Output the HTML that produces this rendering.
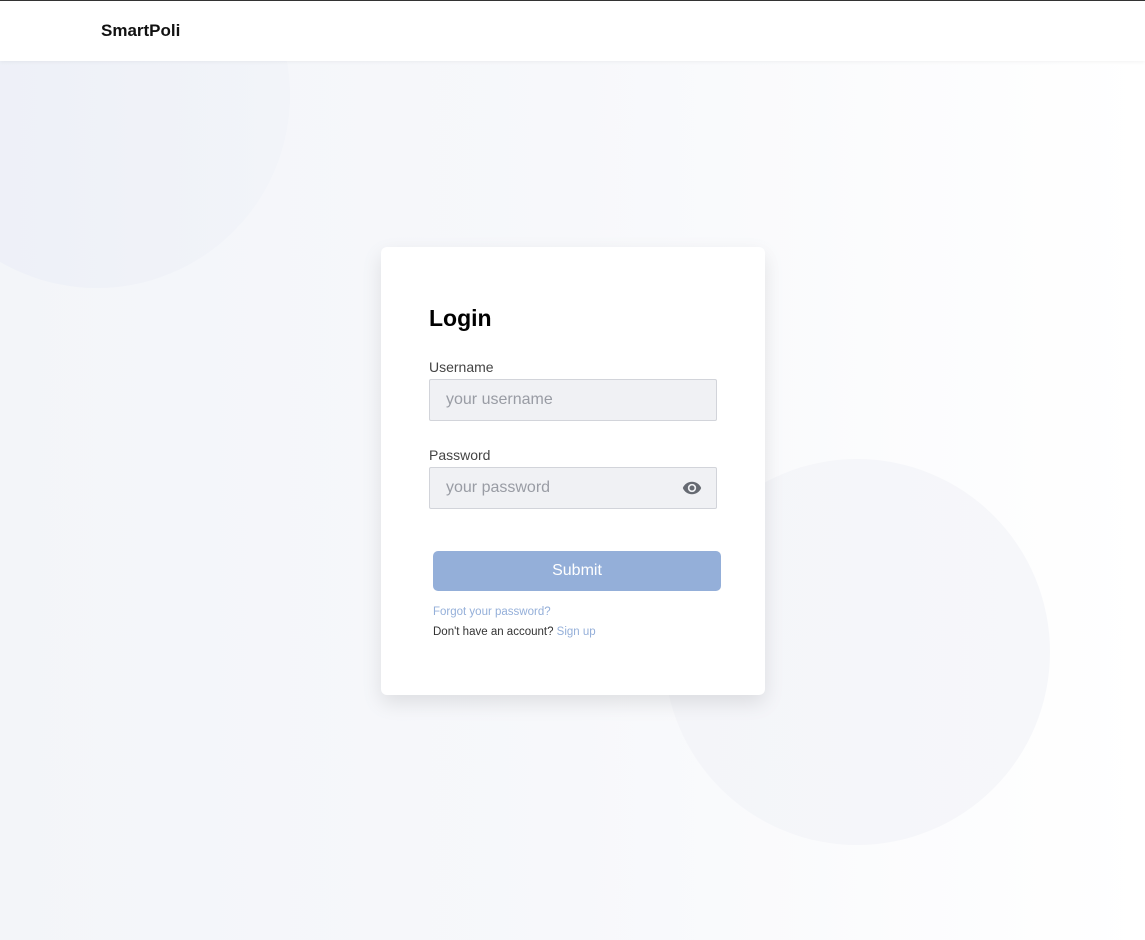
<!DOCTYPE html>
<html><head><style>
*{margin:0;padding:0;box-sizing:border-box}
body{width:1145px;height:940px;overflow:hidden;font-family:"Liberation Sans",sans-serif;background:linear-gradient(90deg,#f3f5f9 0%,#f7f8fb 50%,#ffffff 100%);position:relative}
.top{position:absolute;top:0;left:0;width:1145px;height:61px;background:#fff;border-top:1px solid #333;box-shadow:0 1px 4px rgba(0,0,0,0.05);z-index:2}
.logo{position:absolute;left:101px;top:20px;font-size:17px;font-weight:bold;color:#111}
.c{position:absolute;border-radius:50%;width:386px;height:386px}
.c1{left:-96px;top:-98px;background:linear-gradient(90deg,#eceff7,#f2f4f9)}
.c2{left:664px;top:459px;background:linear-gradient(90deg,#f4f5f9,#f6f7fa)}
.card{position:absolute;left:381px;top:247px;width:384px;height:448px;background:#fff;border-radius:6px;box-shadow:0 8px 20px rgba(0,0,0,0.10)}
h1{position:absolute;left:48px;top:58px;font-size:23px;font-weight:bold;color:#000}
.lbl{position:absolute;left:48px;font-size:14px;color:#444}
.in{position:absolute;left:48px;width:288px;height:42px;background:#f0f1f4;border:1px solid #d2d4da;border-radius:2px;font-size:16px;color:#999ca4;padding:11px 16px}
.btn{position:absolute;left:52px;top:304px;width:288px;height:40px;background:#94afd9;border-radius:5px;color:#fff;font-size:16px;text-align:center;line-height:40px}
.sm{position:absolute;left:52px;font-size:11.5px;color:#333}
.a{color:#94afd9}
</style></head><body>
<div class="c c1"></div><div class="c c2"></div>
<div class="top"><div class="logo">SmartPoli</div></div>
<div class="card">
<h1>Login</h1>
<div class="lbl" style="top:112px">Username</div>
<div class="in" style="top:132px">your username</div>
<div class="lbl" style="top:200px">Password</div>
<div class="in" style="top:220px">your password
<svg style="position:absolute;right:14px;top:10px" width="20" height="20" viewBox="0 0 24 24"><path fill="#666a72" d="M12 4.5C7 4.5 2.7 7.6 1 12c1.7 4.4 6 7.5 11 7.5s9.3-3.1 11-7.5c-1.7-4.4-6-7.5-11-7.5zm0 12.5a5 5 0 1 1 0-10 5 5 0 0 1 0 10zm0-8a3 3 0 1 0 0 6 3 3 0 0 0 0-6z"/></svg></div>
<div class="btn">Submit</div>
<div class="sm a" style="top:359px">Forgot your password?</div>
<div class="sm" style="top:379px">Don't have an account? <span class="a">Sign up</span></div>
</div>
</body></html>
